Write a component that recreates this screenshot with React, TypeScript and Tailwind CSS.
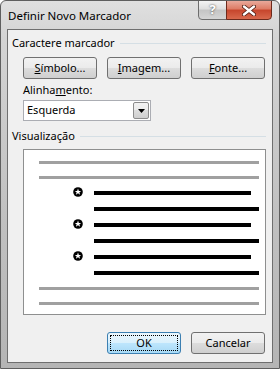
import React from "react";

const font = { fontFamily: '"Noto Sans", "Open Sans", sans-serif' };

function Btn({ children, primary = false }: { children: React.ReactNode; primary?: boolean }) {
  return (
    <div
      className={
        "w-[74px] h-[22px] rounded-[3px] border flex items-center justify-center text-[11px] text-black " +
        (primary
          ? "border-[#3c7fb1] bg-[linear-gradient(#eaf6fd_0%,#d9f0fc_50%,#bee6fd_50%,#a7d9f5_100%)]"
          : "border-[#707070] bg-[linear-gradient(#f2f2f2_0%,#ebebeb_50%,#dddddd_50%,#cfcfcf_100%)]")
      }
    >
      {primary ? (
        <div className="w-[68px] h-[16px] border border-dotted border-black flex items-center justify-center">
          {children}
        </div>
      ) : (
        children
      )}
    </div>
  );
}

function Star() {
  return (
    <svg width="10" height="10" viewBox="0 0 10 10">
      <circle cx="5" cy="5" r="4.8" fill="#000" />
      <polygon
        points="5,1.6 5.85,3.9 8.3,3.9 6.35,5.35 7.1,7.7 5,6.3 2.9,7.7 3.65,5.35 1.7,3.9 4.15,3.9"
        fill="#fff"
      />
    </svg>
  );
}

function GrayLine() {
  return <div className="ml-[15px] mr-[6px] h-[3px] bg-[#a0a0a0]" />;
}

function BlackLine({ bullet = false }: { bullet?: boolean }) {
  return (
    <div className="relative h-[4px]">
      {bullet && (
        <div className="absolute left-[49px] top-[-4px]">
          <Star />
        </div>
      )}
      <div className={"ml-[70px] h-[4px] bg-black " + (bullet ? "mr-[14px]" : "mr-[6px]")} />
    </div>
  );
}

export default function App() {
  return (
    <div
      style={font}
      className="w-[280px] h-[369px] border border-[#5f5f5f] rounded-t-[6px] bg-[linear-gradient(#e0e0e0_0%,#d4d4d4_10%,#c0c0c0_60%,#b5b5b5_100%)] flex flex-col overflow-hidden"
    >
      {/* title bar */}
      <div className="h-[28px] flex items-start shrink-0 relative">
        <div className="pl-[7px] pt-[6px] text-[11.5px] text-black">Definir Novo Marcador</div>
        <div className="absolute right-[7px] top-[-1px] flex">
          <div className="w-[29px] h-[20px] rounded-bl-[4px] border border-[#6d6d6d] bg-[linear-gradient(#f4f4f4_0%,#dedede_45%,#c4c4c4_50%,#d5d5d5_100%)] flex items-center justify-center text-white font-bold text-[13px] [text-shadow:0_0_2px_#333]">
            ?
          </div>
          <div className="w-[46px] h-[20px] -ml-px rounded-br-[4px] border border-[#6d2a1c] bg-[linear-gradient(#e9a99b_0%,#dd7b64_45%,#c6452c_50%,#d8694d_100%)] flex items-center justify-center">
            <svg width="14" height="11" viewBox="0 0 14 11">
              <path d="M2 1.5 L12 9.5 M12 1.5 L2 9.5" stroke="#4a1a10" strokeWidth="4" strokeLinecap="round" />
              <path d="M2 1.5 L12 9.5 M12 1.5 L2 9.5" stroke="#fff" strokeWidth="2.4" strokeLinecap="round" />
            </svg>
          </div>
        </div>
      </div>
      {/* client area */}
      <div className="ml-[6px] mr-[6px] h-[334px] border border-[#6f6f6f] bg-[#f0f0f0] flex flex-col text-[11px] text-black">
        {/* group 1 */}
        <div className="mt-[5px] ml-[4px] mr-[6px] flex items-center h-[16px]">
          <span>Caractere marcador</span>
          <div className="flex-1 ml-[5px] h-px bg-[#d5dfe5]" />
        </div>
        <div className="mt-[6px] ml-[15px] flex gap-[10px]">
          <Btn>
            <span><u>S</u>ímbolo...</span>
          </Btn>
          <Btn>
            <span><u>I</u>magem...</span>
          </Btn>
          <Btn>
            <span><u>F</u>onte...</span>
          </Btn>
        </div>
        <div className="mt-[3px] ml-[15px] h-[16px] flex items-center">
          <span>Alinha<u>m</u>ento:</span>
        </div>
        <div className="mt-[2px] ml-[15px] w-[128px] h-[21px] border border-[#abadb3] bg-white flex items-center">
          <span className="pl-[3px] flex-1">Esquerda</span>
          <div className="w-[16px] h-[17px] mr-px border border-[#8c8c8c] rounded-[2px] bg-[linear-gradient(#f2f2f2_0%,#ebebeb_50%,#dddddd_50%,#cfcfcf_100%)] flex items-center justify-center">
            <svg width="7" height="4" viewBox="0 0 7 4">
              <polygon points="0,0 7,0 3.5,4" fill="#000" />
            </svg>
          </div>
        </div>
        {/* group 2 */}
        <div className="mt-[7px] ml-[4px] mr-[6px] flex items-center h-[16px]">
          <span>Visualização</span>
          <div className="flex-1 ml-[5px] h-px bg-[#d5dfe5]" />
        </div>
        <div className="mt-[5px] ml-[15px] w-[243px] h-[166px] border border-[#8e8f8f] bg-white flex flex-col gap-[12px] pt-[11px]">
          <GrayLine />
          <GrayLine />
          <BlackLine bullet />
          <BlackLine />
          <BlackLine bullet />
          <BlackLine />
          <BlackLine bullet />
          <BlackLine />
          <GrayLine />
          <GrayLine />
        </div>
        <div className="mt-[17px] ml-[99px] flex gap-[10px]">
          <Btn primary>OK</Btn>
          <Btn>Cancelar</Btn>
        </div>
      </div>
    </div>
  );
}
